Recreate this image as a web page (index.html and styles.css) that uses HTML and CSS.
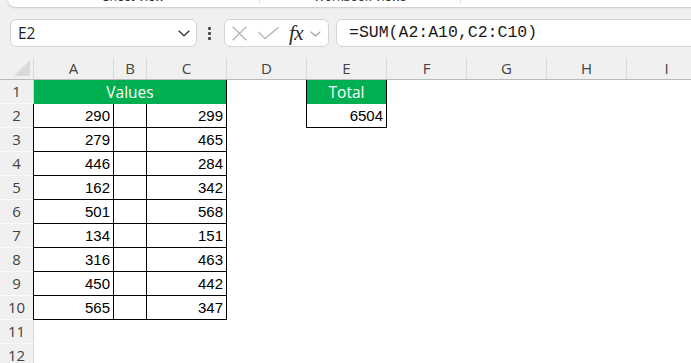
FILE: index.html
```html
<!DOCTYPE html>
<html>
<head>
<meta charset="utf-8">
<link rel="stylesheet" href="styles.css">
</head>
<body>
<div class="ribbon">
  <div class="grp g1"><span class="glabel">Sheet View</span></div>
  <div class="grp g2"><span class="glabel">Workbook Views</span></div>
  <div class="grp g3"></div>
</div>

<div class="fbar">
  <div class="namebox">
    <span class="ref">E2</span>
    <svg class="chev" width="12" height="7" viewBox="0 0 12 7"><polyline points="0.7,0.7 6,5.8 11.3,0.7" fill="none" stroke="#3c3c3c" stroke-width="1.4"/></svg>
  </div>
  <div class="dots"><i></i><i></i><i></i></div>
  <div class="fxbox">
    <svg class="xicon" width="15" height="15" viewBox="0 0 15 15"><path d="M0.7 0.7 L14.3 14.3 M14.3 0.7 L0.7 14.3" stroke="#b3b3b3" stroke-width="1.3" fill="none"/></svg>
    <svg class="check" width="21" height="13" viewBox="0 0 21 13"><polyline points="0.6,5 7,11.6 20.4,0.6" fill="none" stroke="#b3b3b3" stroke-width="1.3"/></svg>
    <span class="fx">fx</span>
    <svg class="chev2" width="11" height="6" viewBox="0 0 11 6"><polyline points="0.6,0.6 5.5,5 10.4,0.6" fill="none" stroke="#9a9a9a" stroke-width="1.2"/></svg>
  </div>
  <div class="formula">=SUM(A2:A10,C2:C10)</div>
</div>

<div class="sheet">
  <div class="row hdr">
    <div class="corner"><svg width="16" height="16" viewBox="0 0 16 16"><polygon points="16,0 16,16 0,16" fill="#dadada"/></svg></div>
    <div class="ch">A</div><div class="ch">B</div><div class="ch">C</div><div class="ch">D</div><div class="ch">E</div><div class="ch">F</div><div class="ch">G</div><div class="ch">H</div><div class="ch">I</div>
  </div>
  <div class="row">
    <div class="rh">1</div>
    <div class="green span3">Values</div>
    <div class="c"></div>
    <div class="green bl">Total</div>
  </div>
  <div class="row">
    <div class="rh">2</div>
    <div class="c n bd bl">290</div><div class="c bd"></div><div class="c n bd">299</div>
    <div class="c"></div>
    <div class="c n bd bl">6504</div>
  </div>
  <div class="row">
    <div class="rh">3</div>
    <div class="c n bd bl">279</div><div class="c bd"></div><div class="c n bd">465</div>
  </div>
  <div class="row">
    <div class="rh">4</div>
    <div class="c n bd bl">446</div><div class="c bd"></div><div class="c n bd">284</div>
  </div>
  <div class="row">
    <div class="rh">5</div>
    <div class="c n bd bl">162</div><div class="c bd"></div><div class="c n bd">342</div>
  </div>
  <div class="row">
    <div class="rh">6</div>
    <div class="c n bd bl">501</div><div class="c bd"></div><div class="c n bd">568</div>
  </div>
  <div class="row">
    <div class="rh">7</div>
    <div class="c n bd bl">134</div><div class="c bd"></div><div class="c n bd">151</div>
  </div>
  <div class="row">
    <div class="rh">8</div>
    <div class="c n bd bl">316</div><div class="c bd"></div><div class="c n bd">463</div>
  </div>
  <div class="row">
    <div class="rh">9</div>
    <div class="c n bd bl">450</div><div class="c bd"></div><div class="c n bd">442</div>
  </div>
  <div class="row">
    <div class="rh">10</div>
    <div class="c n bd bl">565</div><div class="c bd"></div><div class="c n bd">347</div>
  </div>
  <div class="row">
    <div class="rh">11</div>
  </div>
  <div class="row">
    <div class="rh">12</div>
  </div>
</div>
</body>
</html>
```

FILE: styles.css
```css
html, body {
  margin: 0;
  padding: 0;
}
body {
  width: 691px;
  height: 363px;
  overflow: hidden;
  background: #f0f0f0;
  font-family: "Open Sans", "Noto Sans", sans-serif;
  color: #1f1f1f;
}

/* ribbon remnant */
.ribbon {
  margin-top: -23px;
  margin-left: 8px;
  width: 720px;
  height: 30px;
  background: #fff;
  border-bottom-left-radius: 7px;
  box-shadow: 0 1px 2px rgba(0,0,0,0.16), 0 0 1px rgba(0,0,0,0.12);
  display: flex;
  align-items: flex-start;
}
.grp {
  height: 27px;
  box-sizing: border-box;
  display: flex;
  align-items: flex-end;
  justify-content: center;
  flex-shrink: 0;
}
.g1 { width: 252px; border-right: 1px solid #e1e1e1; }
.g2 { width: 201px; border-right: 1px solid #e1e1e1; }
.g3 { flex: 1; }
.glabel {
  font-size: 12px;
  line-height: 12px;
  padding-bottom: 1px;
  color: #262626;
}

/* formula bar */
.fbar {
  display: flex;
  align-items: center;
  height: 28px;
  margin-top: 12px;
  padding-left: 10px;
  width: 900px;
}
.fbar > * {
  flex-shrink: 0;
}
.namebox {
  width: 187px;
  height: 28px;
  box-sizing: border-box;
  background: #fff;
  border: 1px solid #d4d4d4;
  border-radius: 6px;
  display: flex;
  align-items: center;
  justify-content: space-between;
  padding: 0 6px 0 7px;
}
.ref {
  font-size: 15.5px;
  color: #1f1f1f;
}
.chev { display: block; margin-top: 1px; }
.dots {
  margin-left: 11px;
  width: 3px;
  display: flex;
  flex-direction: column;
  gap: 2px;
}
.dots i {
  display: block;
  width: 3px;
  height: 3px;
  background: #4a4a4a;
  border-radius: 1px;
}
.fxbox {
  margin-left: 13px;
  width: 105px;
  height: 28px;
  box-sizing: border-box;
  background: #fff;
  border: 1px solid #d4d4d4;
  border-radius: 6px;
  display: flex;
  align-items: center;
  padding-left: 7px;
}
.xicon { display: block; flex-shrink: 0; }
.check { display: block; margin-left: 11px; flex-shrink: 0; }
.fx {
  margin-left: 10px;
  font-family: "Liberation Serif", "DejaVu Serif", serif;
  font-style: italic;
  font-size: 21px;
  line-height: 20px;
  color: #2b2b2b;
  letter-spacing: -0.5px;
}
.chev2 { display: block; margin-left: 7px; margin-top: 2px; flex-shrink: 0; }
.formula {
  margin-left: 7px;
  width: 420px;
  height: 28px;
  box-sizing: border-box;
  background: #fff;
  border: 1px solid #d4d4d4;
  border-radius: 6px;
  padding-left: 12px;
  font-family: "Liberation Mono", "DejaVu Sans Mono", monospace;
  font-size: 16.5px;
  line-height: 26px;
  color: #1a1a1a;
}

/* sheet grid */
.sheet {
  margin-top: 11px;
  background: #fff;
  width: 707px;
}
.row {
  display: grid;
  grid-template-columns: 34px 80px 33px 80px 80px 80px 80px 80px 80px 80px;
  height: 24px;
}
.row.hdr {
  height: 22px;
}
.corner, .ch {
  background: #f0f0f0;
  box-sizing: border-box;
  border-bottom: 1px solid #bababa;
}
.corner {
  border-right: 1px solid #d9d9d9;
  display: flex;
  align-items: flex-end;
  justify-content: flex-end;
  padding: 0 3px 3px 0;
}
.corner svg { display: block; }
.ch {
  border-right: 1px solid #d9d9d9;
  text-align: center;
  font-size: 15px;
  line-height: 21px;
  color: #424242;
}
.rh {
  background: #f0f0f0;
  box-sizing: border-box;
  border-right: 1px solid #d6d6d6;
  border-bottom: 1px solid #fafafa;
  text-align: center;
  font-size: 15px;
  line-height: 23px;
  color: #424242;
}
.c {
  box-sizing: border-box;
  background: #fff;
}
.n {
  font-family: "Liberation Sans", Arial, sans-serif;
  font-size: 15px;
  line-height: 23px;
  text-align: right;
  padding-right: 3px;
  color: #000;
}
.bd {
  border-right: 1px solid #000;
  border-bottom: 1px solid #000;
}
.bl {
  box-shadow: -1px 0 0 #000;
}
.green {
  background: #00b050;
  color: #fff;
  box-sizing: border-box;
  border-right: 1px solid #000;
  text-align: center;
  font-size: 15.5px;
  line-height: 24px;
}
.span3 {
  grid-column: span 3;
}
```
